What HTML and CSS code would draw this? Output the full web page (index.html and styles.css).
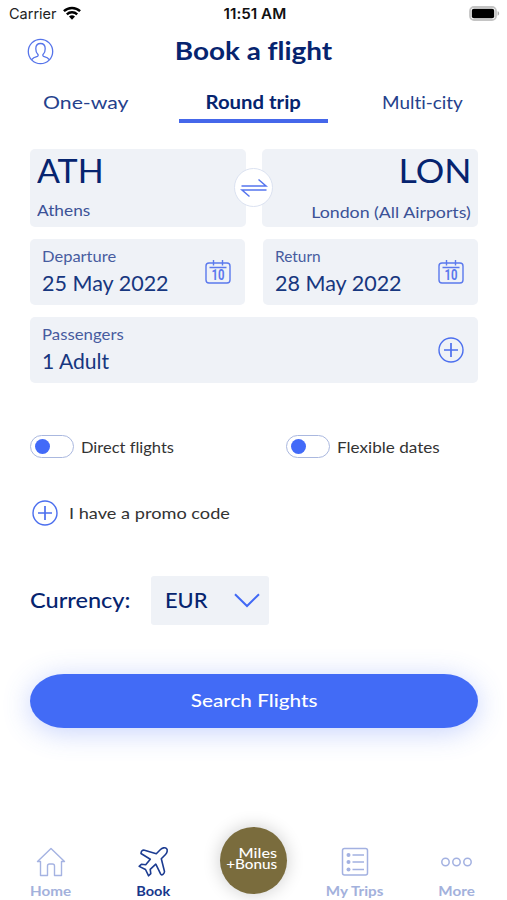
FILE: index.html
```html
<!DOCTYPE html>
<html lang="en">
<head>
<meta charset="utf-8">
<title>Book a flight</title>
<link rel="stylesheet" href="styles.css">
</head>
<body>
<div class="status">
  <div class="carrier"><span>Carrier</span>
    <svg width="18" height="14" viewBox="0 0 18 14" fill="none" stroke="#000" stroke-width="2.4"><path d="M.9 5.2a11.7 11.7 0 0 1 16.2 0M3.8 8.3a7.6 7.6 0 0 1 10.4 0"/><path d="M6 10.6a4.4 4.4 0 0 1 6 0L9 13.7z" fill="#000" stroke="none"/></svg>
  </div>
  <div class="clock">11:51 AM</div>
  <svg class="battery" width="31" height="15" viewBox="0 0 31 15"><rect x="1" y="1" width="26" height="13" rx="4" fill="#fff" stroke="#c4c4c4" stroke-width="1.8"/><rect x="2.8" y="2.8" width="22.4" height="9.4" rx="2" fill="#000"/><path d="M28.6 5.3c2 .6 2 3.8 0 4.4z" fill="#aaa"/></svg>
</div>
<header class="header">
  <svg class="profile" width="27" height="27" viewBox="0 0 27 27" fill="none" stroke="#5674ea" stroke-width="1.3"><circle cx="13.5" cy="13.5" r="12.2"/><path d="M4.7 21.7c1.2-1.9 3.2-2.6 5.7-3.3 1-.4 1-1.8.2-2.5-1.3-1.1-1.8-3-1.8-5.1 0-3.4 1.8-5.3 4.7-5.3s4.7 1.9 4.7 5.3c0 2.1-.5 4-1.8 5.1-.8.7-.8 2.1.2 2.5 2.5.7 4.5 1.4 5.7 3.3"/></svg>
  <h1>Book a flight</h1>
</header>
<nav class="tabs">
  <a class="tab one"><span>One-way</span></a>
  <a class="tab active"><span>Round trip</span></a>
  <a class="tab multi"><span>Multi-city</span></a>
</nav>
<main>
  <section class="route">
    <div class="box airport"><strong class="ath">ATH</strong><span class="athens">Athens</span></div>
    <div class="box airport to"><strong class="lon">LON</strong><span class="london">London (All Airports)</span></div>
    <button class="swap" aria-label="Swap"><svg width="28" height="20" viewBox="0 0 28 20" fill="none" stroke="#5575ee" stroke-width="1.5"><path d="M1.5 8h24.5L18.5 1.5M26.5 12H2l7.5 6.5"/></svg></button>
  </section>
  <section class="dates">
    <div class="box field"><div><label class="dep">Departure</label><p class="date">25 May 2022</p></div>
      <svg class="cal" width="26" height="24" viewBox="0 0 26 24" fill="none" stroke="#5b79ed" stroke-width="1.4"><rect x="1" y="3" width="24" height="20" rx="3"/><path d="M4.5 7.5h17M8.5 0v5.5M17.5 0v5.5"/><text x="6.5" y="19.8" textLength="13" lengthAdjust="spacingAndGlyphs">10</text></svg></div>
    <div class="box field"><div><label class="ret">Return</label><p class="date">28 May 2022</p></div>
      <svg class="cal" width="26" height="24" viewBox="0 0 26 24" fill="none" stroke="#5b79ed" stroke-width="1.4"><rect x="1" y="3" width="24" height="20" rx="3"/><path d="M4.5 7.5h17M8.5 0v5.5M17.5 0v5.5"/><text x="6.5" y="19.8" textLength="13" lengthAdjust="spacingAndGlyphs">10</text></svg></div>
  </section>
  <section class="box field passengers"><div><label class="pax">Passengers</label><p class="adult">1 Adult</p></div>
    <svg width="26" height="26" viewBox="0 0 26 26" fill="none" stroke="#4c6fee" stroke-width="1.4"><circle cx="13" cy="13" r="12"/><path d="M6 13h14M13 6v14" stroke-width="1.7"/></svg>
  </section>
  <section class="options">
    <div class="option"><i class="toggle"></i><span class="direct">Direct flights</span></div>
    <div class="option"><i class="toggle"></i><span class="flexible">Flexible dates</span></div>
  </section>
  <section class="promo">
    <svg width="26" height="26" viewBox="0 0 26 26" fill="none" stroke="#4c6fee" stroke-width="1.4"><circle cx="13" cy="13" r="12"/><path d="M6 13h14M13 6v14" stroke-width="1.7"/></svg>
    <span>I have a promo code</span>
  </section>
  <section class="currency">
    <div class="currency-label"><span>Currency:</span></div>
    <div class="select"><span>EUR</span><svg width="26" height="15" viewBox="0 0 26 15" fill="none" stroke="#4169f5" stroke-width="2"><path d="M1 1.2 13 13 25 1.2"/></svg></div>
  </section>
  <button class="search"><span>Search Flights</span></button>
</main>
<footer class="bar">
  <a class="item home"><svg width="30" height="30" viewBox="0 0 30 30" fill="none" stroke="#a5b3e2" stroke-width="1.4" stroke-linejoin="round"><path d="M15 1.5 1.5 14.5h3V28.5H11.500V19q0-2 2-2h3q2 0 2 2v9.500h7v-14h3z"/></svg><span>Home</span></a>
  <a class="item book"><svg width="30" height="30" viewBox="0 0 30 30" fill="none" stroke="#1b3b91" stroke-width="1.6" stroke-linejoin="round"><path d="M28.500 1.500c-1.500-1.500-4.500-.5-6 1L18.300 6.700 6.500 3.200Q5 2.800 4 3.800T3 6.500L12.300 12.200 7.700 17.800 3.400 17.200 1.200 19.400 7.500 22.500 10.600 28.800 12.800 26.600 12.200 22.300 17.800 17.200 22.700 27.200Q23.500 28.500 25 27.300T26.500 24.500L23.300 11.700 27.500 7.500c1.500-1.500 2.500-4.500 1-6z"/></svg><span>Book</span></a>
  <a class="miles"><span class="m1">Miles</span><span class="m2">+Bonus</span></a>
  <a class="item trips"><svg width="28" height="30" viewBox="0 0 28 30" fill="none" stroke="#a3b1e1" stroke-width="1.5"><rect x="1.500" y="1.500" width="25" height="26.500" rx="2"/><path d="M11.500 8h11.500M11.500 15h11.500M11.500 22.500h11.500"/><g fill="#a3b1e1" stroke="none"><circle cx="7.500" cy="8" r="2"/><circle cx="7.500" cy="15" r="2"/><circle cx="7.500" cy="22.500" r="2"/></g></svg><span>My Trips</span></a>
  <a class="item more"><svg width="32" height="30" viewBox="0 0 32 30" fill="none" stroke="#a3b1e1" stroke-width="1.5"><circle cx="4.500" cy="15" r="3.700"/><circle cx="15.500" cy="15" r="3.700"/><circle cx="26.500" cy="15" r="3.700"/></svg><span>More</span></a>
</footer>
</body>
</html>
```
FILE: styles.css
```css
* { box-sizing: border-box; }
body { margin: 0; width: 507px; height: 900px; background: #fff; color: #06246f; font-family: Lato, "Liberation Sans", sans-serif; font-variant-ligatures: none; overflow: hidden; display: flex; flex-direction: column; }
h1, p { margin: 0; }
svg { display: block; flex: none; overflow: visible; }
button { border: 0; padding: 0; font-family: inherit; }
span, strong, label, p { white-space: nowrap; transform-origin: left center; }
span { display: inline-block; }
label { display: block; }

.status { height: 28px; padding: 0 7px 0 9px; display: grid; grid-template-columns: 1fr auto 1fr; align-items: center; font-family: Inter, sans-serif; font-size: 14.5px; color: #222; }
.carrier { display: flex; gap: 6px; align-items: center; margin-top: -2px; }
.clock { font-weight: 600; color: #111; transform: scaleX(1.05); margin-top: -1px; }
.battery { justify-self: end; margin-top: -2px; }

.header { height: 47px; display: grid; grid-template-columns: 40px 1fr 40px; padding: 0 27px; align-items: center; }
h1 { font-size: 25px; line-height: 45px; padding-bottom: 2px; font-weight: 700; text-align: center; transform: scaleX(1.115); }

.tabs { height: 48px; display: grid; grid-template-columns: 149px 149px 149px; padding-left: 30px; font-size: 18px; color: #25418c; }
.tab { height: 48px; line-height: 54px; }
.tab.one { padding-left: 13px; }
.one span { transform: scaleX(1.18); }
.tab.active { font-weight: 700; color: #06246f; border-bottom: 4px solid #4567ea; text-align: center; }
.active span { transform: scaleX(1.13); transform-origin: center; }
.tab.multi { padding-left: 54px; }
.multi span { transform: scaleX(1.05); }

main { padding: 26px 29px 0 30px; }
.box { background: #eff2f7; border-radius: 5px; }
.route { display: grid; grid-template-columns: 1fr 1fr; gap: 16px; position: relative; }
.airport { height: 78px; padding: 4px 7px; display: flex; flex-direction: column; align-items: flex-start; }
.airport strong { font-size: 33px; font-weight: 400; line-height: 35px; margin-bottom: 1px; transform: scaleX(1.03); }
.airport span { font-size: 16px; line-height: 20px; margin-top: 11px; color: #3c5297; transform: scaleX(1.08); }
.airport.to { align-items: flex-end; }
.airport.to strong { transform-origin: right center; transform: scaleX(1.08); }
.airport.to span { margin-top: 13px; transform-origin: right center; transform: scaleX(1.11); }
.swap { position: absolute; left: 204px; top: 19px; width: 39px; height: 39px; border-radius: 50%; background: #fff; border: 1px solid #dbe2f1; display: grid; place-items: center; }
.dates { display: grid; grid-template-columns: 215px 215px; gap: 18px; margin-top: 12px; }
.field { height: 66px; padding: 0 14px 0 12px; display: flex; align-items: center; justify-content: space-between; }
.field label { font-size: 15px; line-height: 20px; color: #475c9f; margin-top: -2px; transform: scaleX(1.1); }
.field .ret { transform: scaleX(1.03); }
.field .pax { transform: scaleX(1.12); }
.field p { font-size: 20.5px; line-height: 26px; margin-top: 4px; color: #17377f; transform: scaleX(1.05); }
.field .adult { transform: scaleX(1.03); }
.cal text { font: 700 14.5px Roboto, sans-serif; fill: #5b79ed; stroke: none; }
.passengers { margin-top: 12px; }
.options { display: grid; grid-template-columns: 256px 1fr; margin-top: 52px; height: 23px; color: #333; font-size: 16px; }
.option { display: flex; align-items: center; gap: 7px; }
.direct { transform: scaleX(1.03); }
.flexible { transform: scaleX(1.07); }
.toggle { width: 44px; height: 23px; border: 1.5px solid #aab8df; border-radius: 12px; padding: 2.5px 4px; background: #fff; }
.toggle::before { content: ""; display: block; width: 15px; height: 15px; border-radius: 50%; background: #426af8; }
.promo { display: flex; align-items: center; gap: 11px; padding-left: 2px; margin-top: 42px; color: #333; font-size: 16px; height: 26px; }
.promo span { transform: scaleX(1.135); padding-bottom: 2px; }
.currency { margin-top: 50px; display: flex; height: 49px; align-items: center; font-size: 21px; font-weight: 500; }
.currency-label { width: 121px; padding-bottom: 2px; }
.currency-label span { transform: scaleX(1.12); }
.select { width: 118px; height: 49px; border-radius: 3px; background: #eff2f7; display: flex; align-items: center; justify-content: space-between; padding: 0 9px 0 14px; }
.select span { transform: scaleX(1.04); padding-bottom: 2px; }
.search { display: block; width: 448px; height: 54px; margin-top: 49px; border-radius: 34px / 27px; background: #426bf6; box-shadow: 0 4px 28px rgba(66, 107, 246, .3); color: #fff; font-size: 18px; line-height: 52px; padding-bottom: 2px; font-weight: 500; text-align: center; }
.search span { transform: scaleX(1.15); transform-origin: center; }

.bar { margin-top: auto; height: 76px; display: grid; grid-template-columns: 102px 102px 99px 103px 101px; align-items: start; }
.item { display: flex; flex-direction: column; align-items: center; font-size: 13px; font-weight: 700; line-height: 18px; color: #a3b1dc; padding-top: 23px; gap: 5px; }
.item span { transform: scaleX(1.17); transform-origin: center; }
.item.book { color: #17378c; }
.item.book span { transform: scaleX(1.12); }
.miles { width: 67px; height: 67px; margin: 3px auto 0; border-radius: 50%; background: #7a6c3d; box-shadow: 0 0 18px rgba(0, 0, 0, .2); color: #fff; font-size: 13.5px; line-height: 11px; font-weight: 500; display: flex; flex-direction: column; justify-content: center; align-items: flex-end; padding: 0 10px 4px 0; }
.miles span { transform: scaleX(1.2); transform-origin: right center; }
.miles .m2 { transform: scaleX(1.13); }
```
